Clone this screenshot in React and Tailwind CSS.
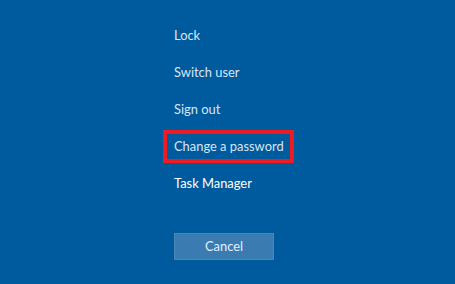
export default function App() {
  const items = ["Lock", "Switch user", "Sign out"];
  return (
    <div className="w-[455px] h-[284px] bg-[#005a9e] overflow-hidden" style={{ fontFamily: 'Lato, "Open Sans", sans-serif' }}>
      <div className="flex flex-col pt-[17px] pl-[174px] whitespace-nowrap">
        {items.map((t) => (
          <div key={t} className="h-[37px] leading-[37px] text-[12.9px] text-[#d8e6f2]">{t}</div>
        ))}
        <div className="h-[37px] flex items-center -ml-[11px]">
          <div className="w-[131px] h-[33px] border-4 border-[#ec1c24] flex items-center pl-[7px] text-[12.9px] text-[#d8e6f2]">Change a password</div>
        </div>
        <div className="h-[37px] leading-[37px] text-[12.9px] text-white">Task Manager</div>
        <div className="mt-[31px] w-[100px] h-[27px] bg-[#3a7bb2] border border-[#4a86b8] flex items-center justify-center text-[12.9px] text-[#e4eef7]">Cancel</div>
      </div>
    </div>
  );
}
